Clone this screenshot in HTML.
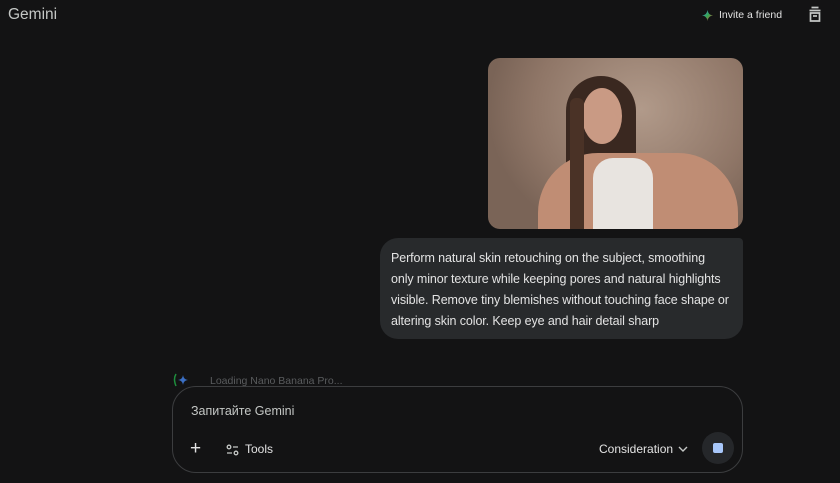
<!DOCTYPE html>
<html><head><meta charset="utf-8"><style>
*{margin:0;padding:0;box-sizing:border-box}
body{width:840px;height:483px;background:#131314;font-family:"Liberation Sans",sans-serif;color:#e3e3e3;position:relative;overflow:hidden}
.logo{position:absolute;left:8px;top:6px;font-size:15.5px;color:#c4c7c5}
.inv{position:absolute;left:702px;top:9px;font-size:10.5px;color:#e3e3e3;display:flex;align-items:center;gap:6px}
.img{position:absolute;left:488px;top:58px;width:255px;height:171px;border-radius:12px;overflow:hidden;
background:radial-gradient(ellipse 60% 80% at 60% 30%,#b19a8a,#8f7667 70%,#7a6457)}
.bub{position:absolute;left:380px;top:238px;width:363px;height:101px;background:#282a2c;border-radius:18px 4px 18px 18px;padding:10px 11px;font-size:12.5px;line-height:21px;color:#e3e3e3;letter-spacing:-0.1px;white-space:nowrap}
.load{position:absolute;left:210px;top:375px;font-size:10.5px;color:#5a5c5e}
.box{position:absolute;left:172px;top:386px;width:571px;height:87px;border:1px solid #3c3d3f;border-radius:24px;background:#131314}
.ph{position:absolute;left:18px;top:17px;font-size:12.5px;color:#c4c7c5}
.bot{position:absolute;top:55px;font-size:12px;color:#e3e3e3}
.stop{position:absolute;left:529px;top:45px;width:32px;height:32px;border-radius:50%;background:#25272a}
.stop i{position:absolute;left:11px;top:11px;width:10px;height:10px;border-radius:2px;background:#a8c7fa}
</style></head><body>
<div class="logo">Gemini</div>
<div class="inv"><svg width="11" height="11" viewBox="0 0 12 12"><defs><linearGradient id="g" x1="0" y1="0" x2="1" y2="1"><stop offset="0" stop-color="#4285f4"/><stop offset=".5" stop-color="#34a853"/><stop offset="1" stop-color="#ea4335"/></linearGradient></defs><path d="M6 0Q6.6 5.4 12 6Q6.6 6.6 6 12Q5.4 6.6 0 6Q5.4 5.4 6 0Z" fill="url(#g)"/></svg>Invite a friend</div>
<svg style="position:absolute;left:807px;top:6px" width="16" height="17" viewBox="0 0 16 17" fill="none" stroke="#c4c7c5" stroke-width="1.7"><path d="M4.5 1.5h7M2.5 4.5h11M3.5 7h9v8h-9z"/><path d="M6 10h4"/></svg>
<div class="img">
<div style="position:absolute;left:78px;top:18px;width:70px;height:170px;border-radius:35px 35px 0 0;background:#3a2820"></div>
<div style="position:absolute;left:94px;top:30px;width:40px;height:56px;border-radius:50%;background:#c99a84"></div>
<div style="position:absolute;left:50px;top:95px;width:200px;height:90px;border-radius:60px 60px 0 0;background:#c08d74"></div>
<div style="position:absolute;left:105px;top:100px;width:60px;height:80px;border-radius:20px 20px 0 0;background:#e8e4e0"></div>
<div style="position:absolute;left:82px;top:40px;width:14px;height:140px;background:#4a3226;border-radius:6px"></div>
</div>
<div class="bub">Perform natural skin retouching on the subject, smoothing<br>only minor texture while keeping pores and natural highlights<br>visible. Remove tiny blemishes without touching face shape or<br>altering skin color. Keep eye and hair detail sharp</div>
<svg style="position:absolute;left:172px;top:372px" width="18" height="16"><path d="M4 2Q1 7 4 14" stroke="#1e8e3e" fill="none" stroke-width="1.5"/><path d="M11 3Q11.5 7.5 16 8Q11.5 8.5 11 13Q10.5 8.5 6 8Q10.5 7.5 11 3Z" fill="#3b6fc4"/></svg>
<div class="load">Loading Nano Banana Pro...</div>
<div class="box">
<div class="ph">Запитайте Gemini</div>
<div class="bot" style="left:17px;top:51px;font-size:19px;font-weight:300">+</div>
<svg style="position:absolute;left:53px;top:57px" width="13" height="12" fill="none" stroke="#c4c7c5" stroke-width="1.3"><circle cx="3" cy="3" r="1.8"/><path d="M7 3h5M1 9h5"/><circle cx="10" cy="9" r="1.8"/></svg>
<div class="bot" style="left:72px">Tools</div>
<div class="bot" style="left:426px">Consideration</div>
<svg style="position:absolute;left:505px;top:58px" width="10" height="8" fill="none" stroke="#c4c7c5" stroke-width="1.4"><path d="M1 2l4 4 4-4"/></svg>
<div class="stop"><i></i></div>
</div>
</body></html>
